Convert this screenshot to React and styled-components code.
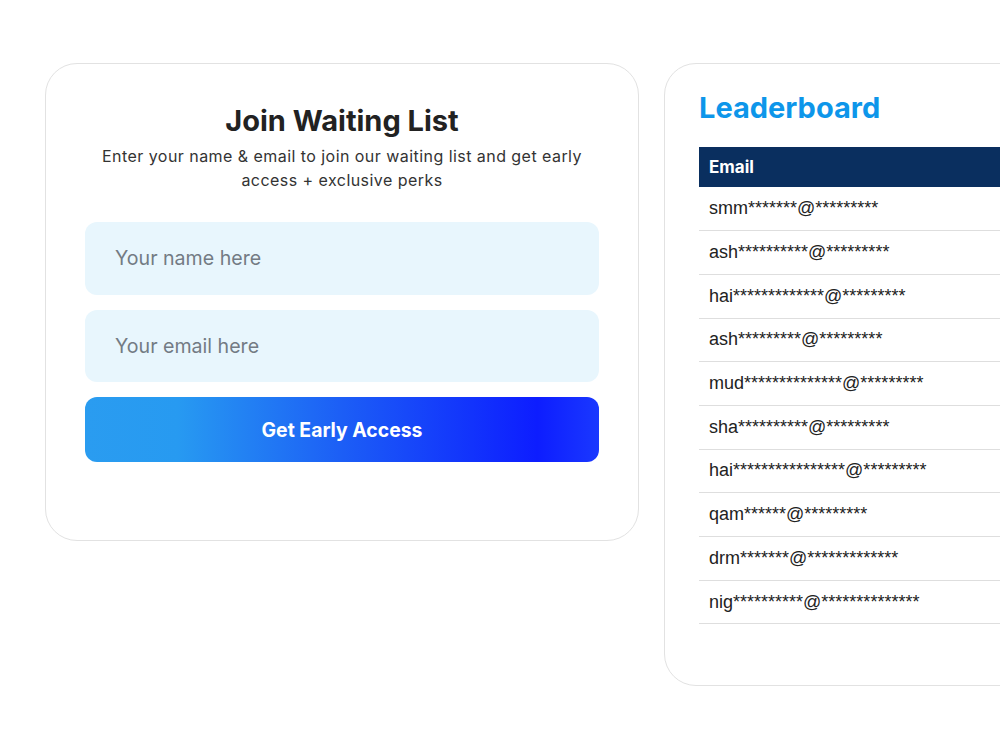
import React from "react";
import styled, { createGlobalStyle } from "styled-components";

const Global = createGlobalStyle`
  html, body { margin: 0; padding: 0; background: #ffffff; overflow: hidden; }
  body { font-family: Inter, "Noto Sans", sans-serif; }
  * { box-sizing: border-box; }
`;

const Page = styled.div`
  display: flex;
  align-items: flex-start;
  gap: 25px;
  padding: 63px 0 0 45px;
  width: 1400px;
`;

const Card = styled.div`
  flex-shrink: 0;
  width: ${(p) => p.$width}px;
  border: 1px solid #e2e2e2;
  border-radius: 32px;
  background: #fff;
`;

const JoinCard = styled(Card)`
  padding: 39px 39px 78px;
  text-align: center;
`;

const Title = styled.h1`
  margin: 0;
  font-size: 29px;
  line-height: 36px;
  font-weight: 700;
  color: #222;
`;

const Subtitle = styled.p`
  margin: 5px 10px 0;
  font-size: 16px;
  line-height: 24px;
  color: #333;
  letter-spacing: 0.45px;
`;

const Form = styled.form`
  display: flex;
  flex-direction: column;
  gap: 15px;
  margin-top: 30px;
`;

const Input = styled.input`
  height: 72.5px;
  border: none;
  outline: none;
  border-radius: 12px;
  background: #e8f6fd;
  padding: 0 30px;
  font-family: Inter, "Noto Sans", sans-serif;
  font-size: 19.6px;
  color: #222;
  &::placeholder { color: #737b84; }
`;

const Button = styled.button`
  height: 65px;
  border: none;
  border-radius: 12px;
  background: linear-gradient(90deg, #2a9cf0 0%, #279af1 18%, #1c5ef6 50%, #0d1dff 88%, #1a38ff 100%);
  color: #fff;
  font-family: Inter, "Noto Sans", sans-serif;
  font-size: 19.4px;
  font-weight: 700;
  cursor: pointer;
`;

const BoardCard = styled(Card)`
  padding: 26px 0 61px 34px;
`;

const BoardTitle = styled.h2`
  margin: 0 0 21px;
  font-size: 29px;
  line-height: 36px;
  font-weight: 700;
  color: #0d96ea;
`;

const Table = styled.table`
  width: 100%;
  border-collapse: collapse;
`;

const Th = styled.th`
  height: 40px;
  padding: 0 10px;
  text-align: left;
  background: #0a2f5f;
  color: #fff;
  font-size: 17px;
  font-weight: 700;
`;

const Td = styled.td`
  height: 43.7px;
  padding: 0 10px;
  border-bottom: 1px solid #dedede;
  font-family: "Liberation Sans", Arial, sans-serif;
  font-size: 18px;
  color: #222;
`;

const mask = (prefix, a, b) => `${prefix}${"*".repeat(a)}@${"*".repeat(b)}`;

const emails = [
  mask("smm", 7, 9),
  mask("ash", 10, 9),
  mask("hai", 13, 9),
  mask("ash", 9, 9),
  mask("mud", 14, 9),
  mask("sha", 10, 9),
  mask("hai", 16, 9),
  mask("qam", 6, 9),
  mask("drm", 7, 13),
  mask("nig", 10, 14),
];

export default function App() {
  return (
    <>
      <Global />
      <Page>
        <JoinCard $width={594}>
          <Title>Join Waiting List</Title>
          <Subtitle>
            Enter your name &amp; email to join our waiting list and get early access + exclusive perks
          </Subtitle>
          <Form onSubmit={(e) => e.preventDefault()}>
            <Input placeholder="Your name here" />
            <Input placeholder="Your email here" />
            <Button type="submit">Get Early Access</Button>
          </Form>
        </JoinCard>
        <BoardCard $width={594}>
          <BoardTitle>Leaderboard</BoardTitle>
          <Table>
            <thead>
              <tr>
                <Th>Email</Th>
              </tr>
            </thead>
            <tbody>
              {emails.map((e, i) => (
                <tr key={i}>
                  <Td>{e}</Td>
                </tr>
              ))}
            </tbody>
          </Table>
        </BoardCard>
      </Page>
    </>
  );
}
